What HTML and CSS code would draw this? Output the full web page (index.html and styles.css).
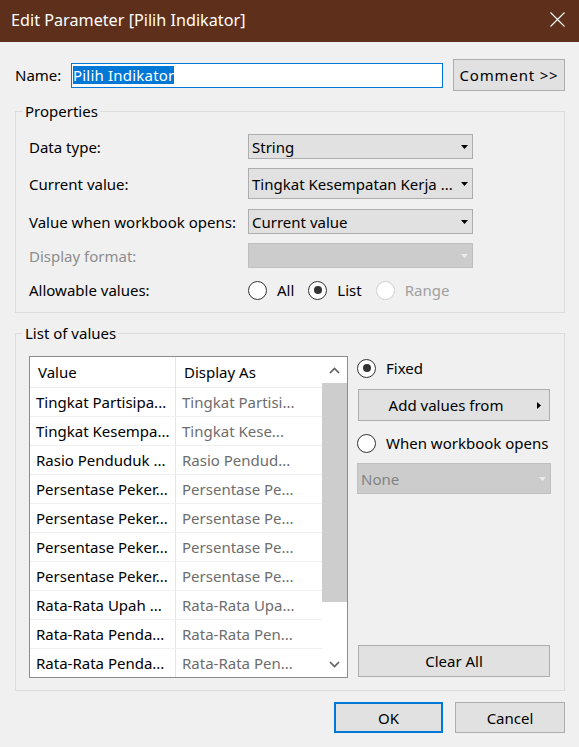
FILE: index.html
```html
<!DOCTYPE html>
<html lang="id">
<head>
<meta charset="utf-8">
<title>Edit Parameter [Pilih Indikator]</title>
<link rel="stylesheet" href="styles.css">
</head>
<body>
<div class="dialog">
  <div class="titlebar">
    <span class="title">Edit Parameter [Pilih Indikator]</span>
    <svg class="close" width="15" height="15" viewBox="0 0 15 15"><path d="M0.5 0.5L14.5 14.5M14.5 0.5L0.5 14.5" stroke="#fff" stroke-width="1.1" fill="none"/></svg>
  </div>
  <div class="main">
    <div class="name-row">
      <span class="name-label">Name:</span>
      <div class="name-input"><span class="sel">Pilih Indikator</span></div>
      <div class="btn comment">Comment &gt;&gt;</div>
    </div>

    <fieldset class="group props">
      <legend>Properties</legend>
      <div class="frow r1">
        <span class="lbl">Data type:</span>
        <div class="combo"><span class="ctext">String</span><svg class="carrow" width="7" height="4" viewBox="0 0 7 4"><path d="M0 0H7L3.5 4Z" fill="#000"/></svg></div>
      </div>
      <div class="frow r2">
        <span class="lbl">Current value:</span>
        <div class="combo tall"><span class="ctext">Tingkat Kesempatan Kerja ...</span><svg class="carrow" width="7" height="4" viewBox="0 0 7 4"><path d="M0 0H7L3.5 4Z" fill="#000"/></svg></div>
      </div>
      <div class="frow r3">
        <span class="lbl">Value when workbook opens:</span>
        <div class="combo"><span class="ctext">Current value</span><svg class="carrow" width="7" height="4" viewBox="0 0 7 4"><path d="M0 0H7L3.5 4Z" fill="#000"/></svg></div>
      </div>
      <div class="frow r4">
        <span class="lbl dis">Display format:</span>
        <div class="combo disabled"><span class="ctext"></span><svg class="carrow" width="7" height="4" viewBox="0 0 7 4"><path d="M0 0H7L3.5 4Z" fill="#ececec"/></svg></div>
      </div>
      <div class="frow r5">
        <span class="lbl">Allowable values:</span>
        <div class="radios">
          <div class="ropt"><span class="radio"></span><span>All</span></div>
          <div class="ropt"><span class="radio on"></span><span>List</span></div>
          <div class="ropt dis"><span class="radio"></span><span>Range</span></div>
        </div>
      </div>
    </fieldset>

    <fieldset class="group values">
      <legend>List of values</legend>
      <div class="lists">
        <div class="listbox">
          <div class="table">
            <div class="trow head"><span class="c1">Value</span><span class="c2">Display As</span></div>
            <div class="trow"><span class="c1">Tingkat Partisipa...</span><span class="c2">Tingkat Partisi...</span></div>
            <div class="trow"><span class="c1">Tingkat Kesempa...</span><span class="c2">Tingkat Kese...</span></div>
            <div class="trow"><span class="c1">Rasio Penduduk ...</span><span class="c2">Rasio Pendud...</span></div>
            <div class="trow"><span class="c1">Persentase Peker...</span><span class="c2">Persentase Pe...</span></div>
            <div class="trow"><span class="c1">Persentase Peker...</span><span class="c2">Persentase Pe...</span></div>
            <div class="trow"><span class="c1">Persentase Peker...</span><span class="c2">Persentase Pe...</span></div>
            <div class="trow"><span class="c1">Persentase Peker...</span><span class="c2">Persentase Pe...</span></div>
            <div class="trow"><span class="c1">Rata-Rata Upah ...</span><span class="c2">Rata-Rata Upa...</span></div>
            <div class="trow"><span class="c1">Rata-Rata Penda...</span><span class="c2">Rata-Rata Pen...</span></div>
            <div class="trow"><span class="c1">Rata-Rata Penda...</span><span class="c2">Rata-Rata Pen...</span></div>
          </div>
          <div class="scroll">
            <div class="sarrow"><svg width="11" height="7" viewBox="0 0 11 7"><path d="M1 6L5.5 1.5L10 6" stroke="#606060" stroke-width="1.7" fill="none"/></svg></div>
            <div class="thumb"></div>
            <div class="strack"></div>
            <div class="sarrow"><svg width="11" height="7" viewBox="0 0 11 7"><path d="M1 1L5.5 5.5L10 1" stroke="#606060" stroke-width="1.7" fill="none"/></svg></div>
          </div>
        </div>
        <div class="side">
          <div class="ropt fixed"><span class="radio on"></span><span>Fixed</span></div>
          <div class="btn addv"><span class="addtext">Add values from</span><svg class="rarrow" width="4" height="7" viewBox="0 0 4 7"><path d="M0 0L4 3.5L0 7Z" fill="#000"/></svg></div>
          <div class="ropt when"><span class="radio"></span><span>When workbook opens</span></div>
          <div class="combo disabled none"><span class="ctext">None</span><svg class="carrow" width="7" height="4" viewBox="0 0 7 4"><path d="M0 0H7L3.5 4Z" fill="#ececec"/></svg></div>
          <div class="btn clear">Clear All</div>
        </div>
      </div>
    </fieldset>

    <div class="actions">
      <div class="btn okbtn">OK</div>
      <div class="btn cancel">Cancel</div>
    </div>
  </div>
</div>
</body>
</html>
```
FILE: styles.css
```css
* { box-sizing: border-box; }
html, body { margin: 0; padding: 0; }
body {
  background: #f0f0f0;
  font-family: "Noto Sans", "Open Sans", sans-serif;
  font-size: 15px;
  line-height: 20px;
  color: #000;
  width: 579px;
  height: 747px;
  overflow: hidden;
}
.titlebar {
  height: 42px;
  background: #5e2f1a;
  color: #fff;
  display: flex;
  align-items: center;
  justify-content: space-between;
  padding: 0 14px 3px 11px;
}
.title { font-size: 16.2px; line-height: 20px; }
.close { display: block; }

.main { padding: 17px 14px 0 15px; }

.name-row { display: flex; align-items: center; height: 32px; }
.name-label { width: 56px; }
.name-input {
  width: 372px;
  height: 25px;
  border: 1px solid #0078d7;
  background: #fff;
  padding: 0 1px;
  display: flex;
  align-items: center;
}
.sel { background: #0078d7; color: #fff; line-height: 18px; letter-spacing: 0.2px; }

.btn {
  background: #e1e1e1;
  border: 1px solid #adadad;
  display: flex;
  align-items: center;
  justify-content: center;
}
.comment { margin-left: 10px; width: 112px; height: 32px; letter-spacing: 0.8px; }

.group {
  margin: 10px 0 0 0;
  border: 1px solid #dcdcdc;
  padding: 13px 13px 12px 13px;
  min-width: 0;
}
.group legend {
  margin-left: -6px;
  padding: 0 2px;
  line-height: 20px;
}

.frow { display: flex; align-items: center; }
.frow .lbl { width: 219px; white-space: nowrap; }
.lbl.dis { color: #8d8d8d; }
.r2 { margin-top: 9px; }
.r3 { margin-top: 10px; }
.r4 { margin-top: 9px; }
.r5 { margin-top: 12px; height: 20px; }

.combo {
  width: 225px;
  height: 25px;
  background: #e1e1e1;
  border: 1px solid #adadad;
  display: flex;
  align-items: center;
  justify-content: space-between;
  padding: 0 4px 0 3px;
  white-space: nowrap;
}
.combo.tall { height: 31px; }
.combo.disabled { background: #cccccc; border-color: #bfbfbf; color: #838383; }
.carrow { display: block; flex: none; }

.radios { display: flex; gap: 14px; }
.ropt { display: flex; align-items: center; gap: 10px; }
.ropt.dis { color: #a0a0a0; }
.radio {
  width: 19px;
  height: 19px;
  border: 1px solid #333;
  border-radius: 50%;
  background: #fff;
  display: flex;
  align-items: center;
  justify-content: center;
  flex: none;
}
.ropt.dis .radio { border-color: #cfcfcf; }
.radio.on::after {
  content: "";
  width: 8px;
  height: 8px;
  border-radius: 50%;
  background: #333;
}

.values { margin-top: 10px; }
.lists { display: flex; gap: 9px; }
.listbox {
  width: 319px;
  height: 322px;
  border: 1px solid #8c8c8c;
  background: #fff;
  display: flex;
  overflow: hidden;
}
.table { width: 292px; flex: none; }
.trow {
  display: flex;
  height: 29px;
  border-bottom: 1px solid #f0f0f0;
  align-items: center;
}
.trow.head { height: 31px; border-bottom-color: #ececec; }
.c1, .c2 {
  height: 100%;
  display: flex;
  align-items: center;
  white-space: nowrap;
  overflow: hidden;
  padding-left: 6px;
}
.c1 { width: 146px; border-right: 1px solid #e5e5e5; }
.c2 { width: 146px; color: #6d6d6d; }
.head .c1, .head .c2 { padding-left: 8px; color: #000; }

.scroll { flex: 1; display: flex; flex-direction: column; background: #fff; }
.sarrow { height: 26px; display: flex; align-items: center; justify-content: center; flex: none; }
.sarrow svg { display: block; }
.thumb { height: 219px; background: #cdcdcd; flex: none; }
.strack { flex: 1; }

.side { width: 194px; display: flex; flex-direction: column; }
.fixed { margin-top: 2px; height: 20px; }
.addv {
  margin: 11px 1px 0 1px;
  height: 32px;
  padding: 0 8px 0 0;
}
.addtext { flex: 1; text-align: center; }
.rarrow { display: block; margin-left: 4px; flex: none; }
.when { margin-top: 12px; height: 20px; }
.none { width: 194px; height: 31px; margin-top: 10px; }
.clear { margin: auto 1px 1px 1px; height: 32px; }

.actions { display: flex; justify-content: flex-end; gap: 12px; margin-top: 11px; }
.okbtn { width: 109px; height: 31px; border: 2px solid #0078d7; }
.cancel { width: 110px; height: 31px; }
```
